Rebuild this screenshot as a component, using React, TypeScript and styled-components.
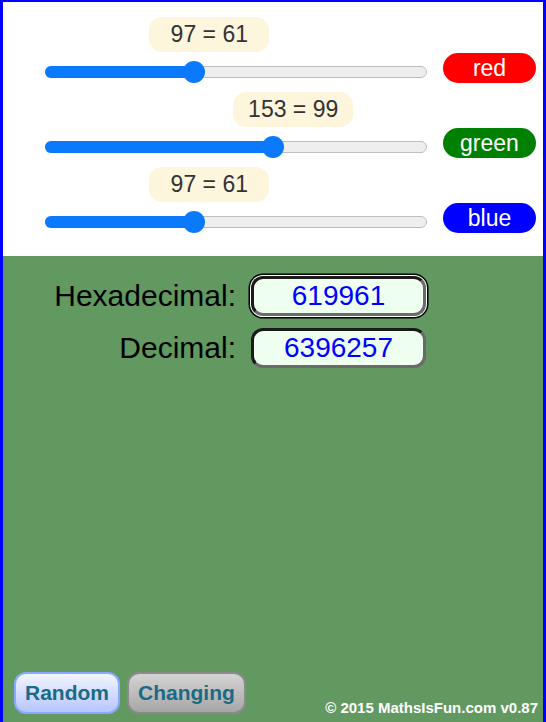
import styled, { createGlobalStyle } from 'styled-components';

const GlobalStyle = createGlobalStyle`
  html, body {
    margin: 0;
    padding: 0;
    overflow: hidden;
    background: #fff;
  }
  body {
    font-family: 'Liberation Sans', Arial, sans-serif;
  }
`;

type Channel = {
  name: string;
  color: string;
  value: number;
};

const channels: Channel[] = [
  { name: 'red', color: '#ff0000', value: 97 },
  { name: 'green', color: '#008000', value: 153 },
  { name: 'blue', color: '#0000ff', value: 97 },
];

const TRACK_WIDTH = 382;
const THUMB = 22;

const toHex = (n: number) => n.toString(16).toUpperCase().padStart(2, '0');

export default function App() {
  const hex = channels.map((c) => toHex(c.value)).join('');
  const decimal = parseInt(hex, 16);

  return (
    <>
      <GlobalStyle />
      <Frame>
        <SliderPanel>
          {channels.map((c) => {
            const f = c.value / 255;
            const thumbCenter = THUMB / 2 + f * (TRACK_WIDTH - THUMB);
            return (
              <SliderRow key={c.name}>
                <Slider>
                  <Bubble style={{ left: f * TRACK_WIDTH - 41 }}>
                    {c.value} = {toHex(c.value)}
                  </Bubble>
                  <Track>
                    <Fill style={{ width: thumbCenter }} />
                    <Thumb style={{ left: thumbCenter - THUMB / 2 }} />
                  </Track>
                </Slider>
                <ColorPill $color={c.color}>{c.name}</ColorPill>
              </SliderRow>
            );
          })}
        </SliderPanel>

        <ResultPanel style={{ background: `#${hex}` }}>
          <Fields>
            <Label>Hexadecimal:</Label>
            <ValueBox $focused>{hex}</ValueBox>
            <Label>Decimal:</Label>
            <ValueBox>{decimal}</ValueBox>
          </Fields>

          <Footer>
            <Button $variant="blue">Random</Button>
            <Button $variant="gray">Changing</Button>
            <Copyright>© 2015 MathsIsFun.com v0.87</Copyright>
          </Footer>
        </ResultPanel>
      </Frame>
    </>
  );
}

const Frame = styled.div`
  box-sizing: border-box;
  width: 546px;
  height: 722px;
  border-top: 2px solid #0000ff;
  border-left: 3px solid #0000ff;
  border-right: 3px solid #0000ff;
  display: flex;
  flex-direction: column;
`;

const SliderPanel = styled.div`
  height: 254px;
  padding-top: 8px;
  box-sizing: border-box;
  background: #fff;
`;

const SliderRow = styled.div`
  height: 75px;
  display: flex;
  align-items: flex-end;
  padding: 0 0 2px 42px;
  box-sizing: border-box;
  gap: 16px;
`;

const Slider = styled.div`
  position: relative;
  width: ${TRACK_WIDTH}px;
  height: ${THUMB}px;
  display: flex;
  align-items: center;
`;

const Bubble = styled.div`
  position: absolute;
  top: -44px;
  width: 120px;
  height: 35px;
  border-radius: 13px;
  background: #fdf6dd;
  color: #333;
  font-size: 23px;
  line-height: 35px;
  text-align: center;
`;

const Track = styled.div`
  position: relative;
  width: 100%;
  height: 12px;
  box-sizing: border-box;
  border: 1px solid #bdbdbd;
  border-radius: 6px;
  background: #eeeeee;
`;

const Fill = styled.div`
  position: absolute;
  left: -1px;
  top: -1px;
  height: 12px;
  border-radius: 6px;
  background: #0a79fb;
`;

const Thumb = styled.div`
  position: absolute;
  top: -6px;
  width: ${THUMB}px;
  height: ${THUMB}px;
  border-radius: 50%;
  background: #0a79fb;
`;

const ColorPill = styled.div<{ $color: string }>`
  width: 93px;
  height: 30px;
  border-radius: 15px;
  background: ${(p) => p.$color};
  color: #fff;
  font-size: 23px;
  line-height: 30px;
  text-align: center;
`;

const ResultPanel = styled.div`
  flex: 1;
  display: flex;
  flex-direction: column;
`;

const Fields = styled.div`
  display: grid;
  grid-template-columns: 233px 175px;
  column-gap: 15px;
  row-gap: 12px;
  align-items: center;
  padding-top: 20px;
`;

const Label = styled.div`
  text-align: right;
  font-size: 30px;
  color: #000;
`;

const ValueBox = styled.div<{ $focused?: boolean }>`
  box-sizing: border-box;
  height: 40px;
  border: 3px solid;
  border-color: #1a1a1a #6a6a6a #6a6a6a #1a1a1a;
  border-radius: 12px;
  background: #efffef;
  color: #0000ff;
  font-size: 28px;
  line-height: 34px;
  text-align: center;
  ${(p) => p.$focused && 'box-shadow: 0 0 0 1px #fff, 0 0 0 2.5px #000;'}
`;

const Footer = styled.div`
  margin-top: auto;
  display: flex;
  align-items: flex-end;
  gap: 7px;
  padding: 0 5px 8px 11px;
`;

const Button = styled.button<{ $variant: 'blue' | 'gray' }>`
  height: 42px;
  padding: 0 9px;
  border-radius: 12px;
  border: 2px solid ${(p) => (p.$variant === 'blue' ? '#8aa8ff' : '#8a8a8a')};
  background: ${(p) =>
    p.$variant === 'blue'
      ? 'linear-gradient(to bottom, #f2f5ff, #b6c6ff)'
      : 'linear-gradient(to bottom, #d4d4d4, #a6a6a6)'};
  color: #1b6a86;
  font-family: 'Liberation Sans', Arial, sans-serif;
  font-weight: bold;
  font-size: 21px;
`;

const Copyright = styled.div`
  margin-left: auto;
  color: #fff;
  font-weight: bold;
  font-size: 15px;
  line-height: 18px;
  margin-bottom: -3px;
`;
